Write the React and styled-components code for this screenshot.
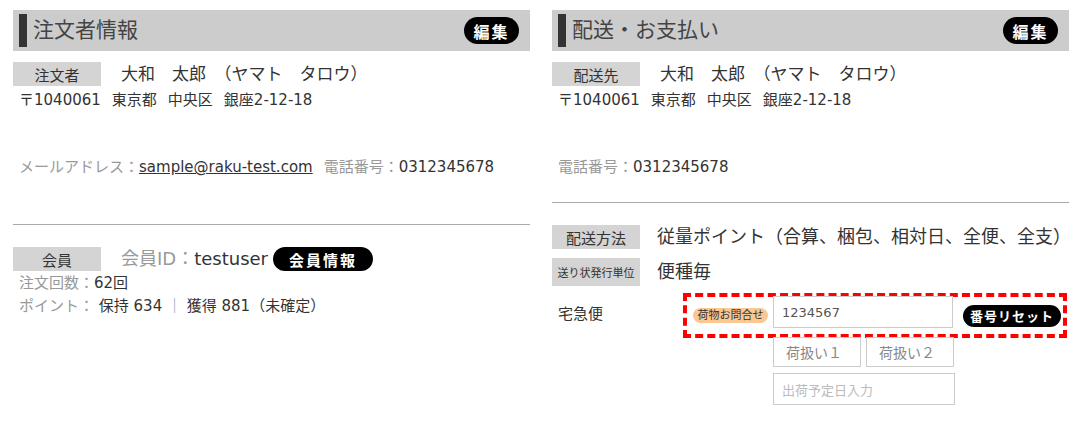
import styled, { createGlobalStyle } from "styled-components";

const GlobalStyle = createGlobalStyle`
  html, body {
    margin: 0;
    padding: 0;
    background: #fff;
  }
  body {
    font-family: "DejaVu Sans", "Noto Sans CJK JP", sans-serif;
    color: #333;
  }
`;

const Page = styled.div`
  display: flex;
  gap: 22px;
  padding: 10px 9px 0 13px;
`;

const Column = styled.section`
  width: 517px;
  display: flex;
  flex-direction: column;
`;

const Header = styled.div`
  height: 41px;
  background: #ccc;
  display: flex;
  align-items: center;
  padding: 0 11px 0 6px;

  &::before {
    content: "";
    width: 8px;
    height: 33px;
    background: #333;
    margin-right: 6px;
  }

  h2 {
    margin: 0;
    font-size: 21px;
    font-weight: 400;
    color: #444;
    line-height: 1;
  }
`;

const PillButton = styled.button`
  margin-left: ${(props) => (props.$push ? "auto" : "0")};
  width: ${(props) => props.$w || 55}px;
  height: ${(props) => props.$h || 27}px;
  padding: 0;
  border: none;
  border-radius: 14px;
  background: #000;
  color: #fff;
  font-family: "Noto Sans CJK JP", sans-serif;
  font-size: ${(props) => props.$fs || 16}px;
  font-weight: 700;
  letter-spacing: ${(props) => props.$ls || 2}px;
  line-height: 1;
  white-space: nowrap;
  flex-shrink: 0;
  cursor: pointer;
`;

const Row = styled.div`
  display: flex;
  align-items: center;
  gap: ${(props) => props.$gap || 20}px;
  margin-top: ${(props) => props.$mt || 0}px;
`;

const Label = styled.div`
  width: 88px;
  height: ${(props) => props.$h || 24}px;
  flex-shrink: 0;
  background: #d4d4d4;
  display: flex;
  align-items: center;
  justify-content: center;
  font-size: ${(props) => props.$fs || 15}px;
  color: #333;
  white-space: nowrap;
`;

const Name = styled.div`
  font-size: ${(props) => props.$fs || 17}px;
  line-height: 24px;
  color: #333;
  white-space: nowrap;
`;

const Line = styled.div`
  padding-left: 6px;
  font-size: 15px;
  line-height: ${(props) => props.$lh || 20}px;
  margin-top: ${(props) => props.$mt || 0}px;
  color: #333;
  white-space: nowrap;
  display: flex;
  gap: ${(props) => props.$gap || 0}px;
`;

const Muted = styled.span`
  color: #999;
`;

const Mail = styled.a`
  color: #333;
  text-decoration: underline;
  margin-right: 11px;
`;

const Divider = styled.hr`
  margin: ${(props) => props.$mt}px 0 0;
  border: none;
  border-top: 1px solid #aaa;
  height: 0;
`;

const MemberId = styled.div`
  font-size: 18px;
  line-height: 24px;
  color: #333;
  display: flex;
  align-items: center;
  gap: 5px;
`;

const Bar = styled.span`
  color: #8a95a8;
`;

const ShipRow = styled.div`
  display: flex;
  margin-top: 7px;
`;

const ShipName = styled.div`
  width: 125px;
  padding: 11px 0 0 6px;
  font-size: 15px;
  line-height: 20px;
  color: #333;
`;

const ShipBody = styled.div`
  display: flex;
  flex-direction: column;
`;

const Tracking = styled.div`
  width: 384px;
  height: 45px;
  box-sizing: border-box;
  border: 4px dashed #f00;
  display: flex;
  align-items: center;
  padding: 0 2px 0 6px;
`;

const Badge = styled.span`
  width: 75px;
  height: 15px;
  flex-shrink: 0;
  border-radius: 8px;
  background: #fcc792;
  font-size: 11px;
  line-height: 15px;
  text-align: center;
  color: #333;
  white-space: nowrap;
`;

const Field = styled.div`
  width: ${(props) => props.$w}px;
  height: ${(props) => props.$h || 32}px;
  box-sizing: border-box;
  border: 1px solid #ccc;
  background: #fff;
  display: flex;
  align-items: center;
  padding-left: ${(props) => props.$pl || 8}px;
  font-size: ${(props) => props.$fs || 13}px;
  color: ${(props) => props.$color || "#555"};
  white-space: nowrap;
  flex-shrink: 0;
`;

const TrackField = styled(Field)`
  align-self: flex-start;
  margin: -1px 10px 0 5px;
`;

const SubRows = styled.div`
  display: flex;
  flex-direction: column;
  gap: 6px;
  margin: -1px 0 0 90px;
`;

const SubRow = styled.div`
  display: flex;
  gap: 5px;
`;

export default function App() {
  return (
    <>
      <GlobalStyle />
      <Page>
        <Column>
          <Header>
            <h2>注文者情報</h2>
            <PillButton $push>編集</PillButton>
          </Header>
          <Row $mt={11}>
            <Label>注文者</Label>
            <Name>大和　太郎　（ヤマト　タロウ）</Name>
          </Row>
          <Line $mt={4} $gap={11}>
            <span>〒1040061</span>
            <span>東京都</span>
            <span>中央区</span>
            <span>銀座2-12-18</span>
          </Line>
          <Line $mt={47}>
            <Muted>メールアドレス：</Muted>
            <Mail href="#">sample@raku-test.com</Mail>
            <Muted>電話番号：</Muted>
            <span>0312345678</span>
          </Line>
          <Divider $mt={47} />
          <Row $mt={22}>
            <Label>会員</Label>
            <MemberId>
              <span>
                <Muted>会員ID：</Muted>testuser
              </span>
              <PillButton $w={100} $h={24} $fs={15} $ls={2}>
                会員情報
              </PillButton>
            </MemberId>
          </Row>
          <Line $lh={23} $mt={1}>
            <Muted>注文回数：</Muted>
            <span>62回</span>
          </Line>
          <Line $lh={23}>
            <Muted>ポイント：</Muted>
            <span>
              &nbsp;保持 634 <Bar>｜</Bar> 獲得 881（未確定）
            </span>
          </Line>
        </Column>

        <Column>
          <Header>
            <h2>配送・お支払い</h2>
            <PillButton $push>編集</PillButton>
          </Header>
          <Row $mt={11}>
            <Label>配送先</Label>
            <Name>大和　太郎　（ヤマト　タロウ）</Name>
          </Row>
          <Line $mt={4} $gap={11}>
            <span>〒1040061</span>
            <span>東京都</span>
            <span>中央区</span>
            <span>銀座2-12-18</span>
          </Line>
          <Line $mt={47}>
            <Muted>電話番号：</Muted>
            <span>0312345678</span>
          </Line>
          <Divider $mt={25} />
          <Row $mt={22} $gap={17}>
            <Label>配送方法</Label>
            <Name $fs={18}>従量ポイント（合算、梱包、相対日、全便、全支）</Name>
          </Row>
          <Row $mt={9} $gap={17}>
            <Label $h={28} $fs={11}>送り状発行単位</Label>
            <Name $fs={18}>便種毎</Name>
          </Row>
          <ShipRow>
            <ShipName>宅急便</ShipName>
            <ShipBody>
              <Tracking>
                <Badge>荷物お問合せ</Badge>
                <TrackField $w={180}>1234567</TrackField>
                <PillButton $w={98} $h={22} $fs={13} $ls={1}>
                  番号リセット
                </PillButton>
              </Tracking>
              <SubRows>
                <SubRow>
                  <Field $w={88} $h={30} $pl={12} $fs={14} $color="#888">
                    荷扱い１
                  </Field>
                  <Field $w={88} $h={30} $pl={12} $fs={14} $color="#888">
                    荷扱い２
                  </Field>
                </SubRow>
                <Field $w={182} $h={32} $color="#bbb">
                  出荷予定日入力
                </Field>
              </SubRows>
            </ShipBody>
          </ShipRow>
        </Column>
      </Page>
    </>
  );
}
